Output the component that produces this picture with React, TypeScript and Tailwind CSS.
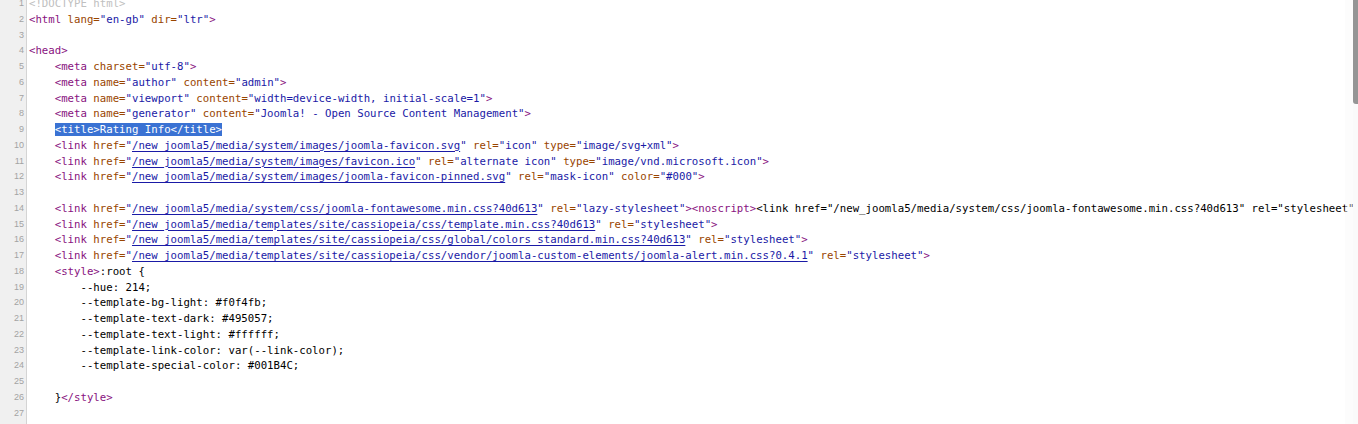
type Tok = [string, string];

// token kinds: t tag, n attr name, v attr value, l resource link, x plain, d doctype, s selection
const colors: Record<string, string> = {
  t: "text-[#881280]",
  n: "text-[#994500]",
  v: "text-[#1a1aa6]",
  l: "text-[#1a1aa6] underline underline-offset-[2px]",
  x: "text-black",
  d: "text-[#c0c0c0]",
  s: "bg-[#3a72d3] text-white",
};

const link = (href: string, rest: Tok[]): Tok[] => [
  ["x", "    "],
  ["t", "<link "],
  ["n", "href="],
  ["v", '"'],
  ["l", href],
  ["v", '"'],
  ...rest,
];

const lines: Tok[][] = [
  [["d", "<!DOCTYPE html>"]],
  [
    ["t", "<html "],
    ["n", "lang="],
    ["v", '"en-gb"'],
    ["t", " "],
    ["n", "dir="],
    ["v", '"ltr"'],
    ["t", ">"],
  ],
  [],
  [["t", "<head>"]],
  [["x", "    "], ["t", "<meta "], ["n", "charset="], ["v", '"utf-8"'], ["t", ">"]],
  [
    ["x", "    "],
    ["t", "<meta "],
    ["n", "name="],
    ["v", '"author"'],
    ["t", " "],
    ["n", "content="],
    ["v", '"admin"'],
    ["t", ">"],
  ],
  [
    ["x", "    "],
    ["t", "<meta "],
    ["n", "name="],
    ["v", '"viewport"'],
    ["t", " "],
    ["n", "content="],
    ["v", '"width=device-width, initial-scale=1"'],
    ["t", ">"],
  ],
  [
    ["x", "    "],
    ["t", "<meta "],
    ["n", "name="],
    ["v", '"generator"'],
    ["t", " "],
    ["n", "content="],
    ["v", '"Joomla! - Open Source Content Management"'],
    ["t", ">"],
  ],
  [["x", "    "], ["s", "<title>Rating Info</title>"]],
  link("/new_joomla5/media/system/images/joomla-favicon.svg", [
    ["t", " "],
    ["n", "rel="],
    ["v", '"icon"'],
    ["t", " "],
    ["n", "type="],
    ["v", '"image/svg+xml"'],
    ["t", ">"],
  ]),
  link("/new_joomla5/media/system/images/favicon.ico", [
    ["t", " "],
    ["n", "rel="],
    ["v", '"alternate icon"'],
    ["t", " "],
    ["n", "type="],
    ["v", '"image/vnd.microsoft.icon"'],
    ["t", ">"],
  ]),
  link("/new_joomla5/media/system/images/joomla-favicon-pinned.svg", [
    ["t", " "],
    ["n", "rel="],
    ["v", '"mask-icon"'],
    ["t", " "],
    ["n", "color="],
    ["v", '"#000"'],
    ["t", ">"],
  ]),
  [],
  link("/new_joomla5/media/system/css/joomla-fontawesome.min.css?40d613", [
    ["t", " "],
    ["n", "rel="],
    ["v", '"lazy-stylesheet"'],
    ["t", "><noscript>"],
    [
      "x",
      '<link href="/new_joomla5/media/system/css/joomla-fontawesome.min.css?40d613" rel="stylesheet"></noscript>',
    ],
  ]),
  link("/new_joomla5/media/templates/site/cassiopeia/css/template.min.css?40d613", [
    ["t", " "],
    ["n", "rel="],
    ["v", '"stylesheet"'],
    ["t", ">"],
  ]),
  link("/new_joomla5/media/templates/site/cassiopeia/css/global/colors_standard.min.css?40d613", [
    ["t", " "],
    ["n", "rel="],
    ["v", '"stylesheet"'],
    ["t", ">"],
  ]),
  link(
    "/new_joomla5/media/templates/site/cassiopeia/css/vendor/joomla-custom-elements/joomla-alert.min.css?0.4.1",
    [
      ["t", " "],
      ["n", "rel="],
      ["v", '"stylesheet"'],
      ["t", ">"],
    ]
  ),
  [["x", "    "], ["t", "<style>"], ["x", ":root {"]],
  [["x", "        --hue: 214;"]],
  [["x", "        --template-bg-light: #f0f4fb;"]],
  [["x", "        --template-text-dark: #495057;"]],
  [["x", "        --template-text-light: #ffffff;"]],
  [["x", "        --template-link-color: var(--link-color);"]],
  [["x", "        --template-special-color: #001B4C;"]],
  [],
  [["x", "    }"], ["t", "</style>"]],
  [],
];

export default function App() {
  return (
    <div className="relative h-[424px] w-[1358px] overflow-hidden bg-white">
      <div className="flex h-full">
        {/* line numbers */}
        <div className="w-[27px] shrink-0 border-r border-[#d4d4d4] bg-[#f0f0f0]">
          <div className="-mt-[4px] pr-[2px] text-right font-['Liberation_Sans',sans-serif] text-[9px] leading-[15.75px] text-[#a3a3a3]">
            {lines.map((_, i) => (
              <div key={i}>{i + 1}</div>
            ))}
          </div>
        </div>

        {/* source */}
        <div className="min-w-0 flex-1 overflow-hidden pl-[2px]">
          <div className="-mt-[4px] whitespace-pre font-['DejaVu_Sans_Mono',monospace] text-[10.7px] leading-[15.75px]">
            {lines.map((toks, i) => (
              <div key={i} className="h-[15.75px]">
                {toks.map(([k, s], j) => (
                  <span key={j} className={colors[k]}>
                    {s}
                  </span>
                ))}
              </div>
            ))}
          </div>
        </div>
      </div>

      {/* scrollbar */}
      <div className="absolute right-0 top-0 flex h-full w-[13px] bg-[#f7f7f7]/40">
        <div className="ml-auto h-full w-[5px] bg-[#fafafa]">
          <div className="h-[104px] w-full rounded-bl-[3px] bg-[#959595]" />
        </div>
      </div>
    </div>
  );
}
